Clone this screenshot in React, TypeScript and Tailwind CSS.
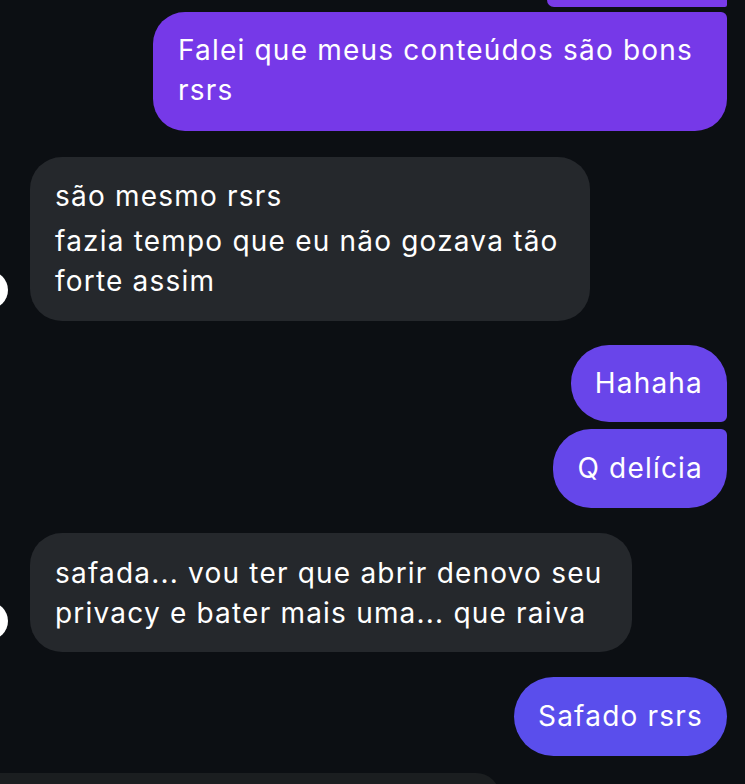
import React from 'react';

const font = { fontFamily: 'Inter, "Noto Sans", sans-serif' };

function Avatar({ bottom }: { bottom: string }) {
	return <div className={`-ml-[30px] mr-[22px] h-[38px] w-[38px] shrink-0 rounded-full bg-white ${bottom}`} />;
}

export default function App() {
	return (
		<div className="h-[784px] w-[745px] overflow-hidden bg-[#0c0f13] text-white tracking-[1.2px]" style={font}>
			<div className="flex flex-col">
				<div className="mr-[18px] h-[7px] w-[180px] self-end rounded-bl-[20px] rounded-br-[6px] bg-[#7a3be9]" />

				<div className="mt-[5px] mr-[18px] w-[574px] self-end rounded-[32px] rounded-tr-[6px] bg-[#7639e8] px-[25px] pt-[18px] pb-[21px] text-[28px] leading-[40px]">
					Falei que meus conteúdos são bons rsrs
				</div>

				<div className="mt-[26px] flex items-end">
					<Avatar bottom="mb-[12px]" />
					<div className="w-[560px] rounded-[32px] bg-[#25282c] px-[25px] pt-[19px] pb-[20px] text-[28px] leading-[40px]">
						<p>são mesmo rsrs</p>
						<p className="mt-[5px]">fazia tempo que eu não gozava tão forte assim</p>
					</div>
				</div>

				<div className="mt-[24px] mr-[18px] self-end rounded-[38px] rounded-br-[6px] bg-[#6945ea] px-[24px] py-[18px] text-[28px] leading-[41px]">
					Hahaha
				</div>
				<div className="mt-[7px] mr-[18px] self-end rounded-[38px] rounded-tr-[6px] bg-[#6547ea] px-[24px] py-[19px] text-[28px] leading-[41px]">
					Q delícia
				</div>

				<div className="mt-[25px] flex items-end">
					<Avatar bottom="mb-[12px]" />
					<div className="w-[602px] rounded-[32px] bg-[#25282c] px-[25px] pt-[20px] pb-[19px] text-[28px] leading-[40px]">
						safada... vou ter que abrir denovo seu privacy e bater mais uma... que raiva
					</div>
				</div>

				<div className="mt-[25px] mr-[18px] self-end rounded-[40px] bg-[#5a4eec] px-[24px] py-[19px] text-[28px] leading-[41px]">
					Safado rsrs
				</div>

				<div className="mt-[17px] h-[40px] w-[500px] rounded-tr-[24px] bg-[#1b1e20]" />
			</div>
		</div>
	);
}
